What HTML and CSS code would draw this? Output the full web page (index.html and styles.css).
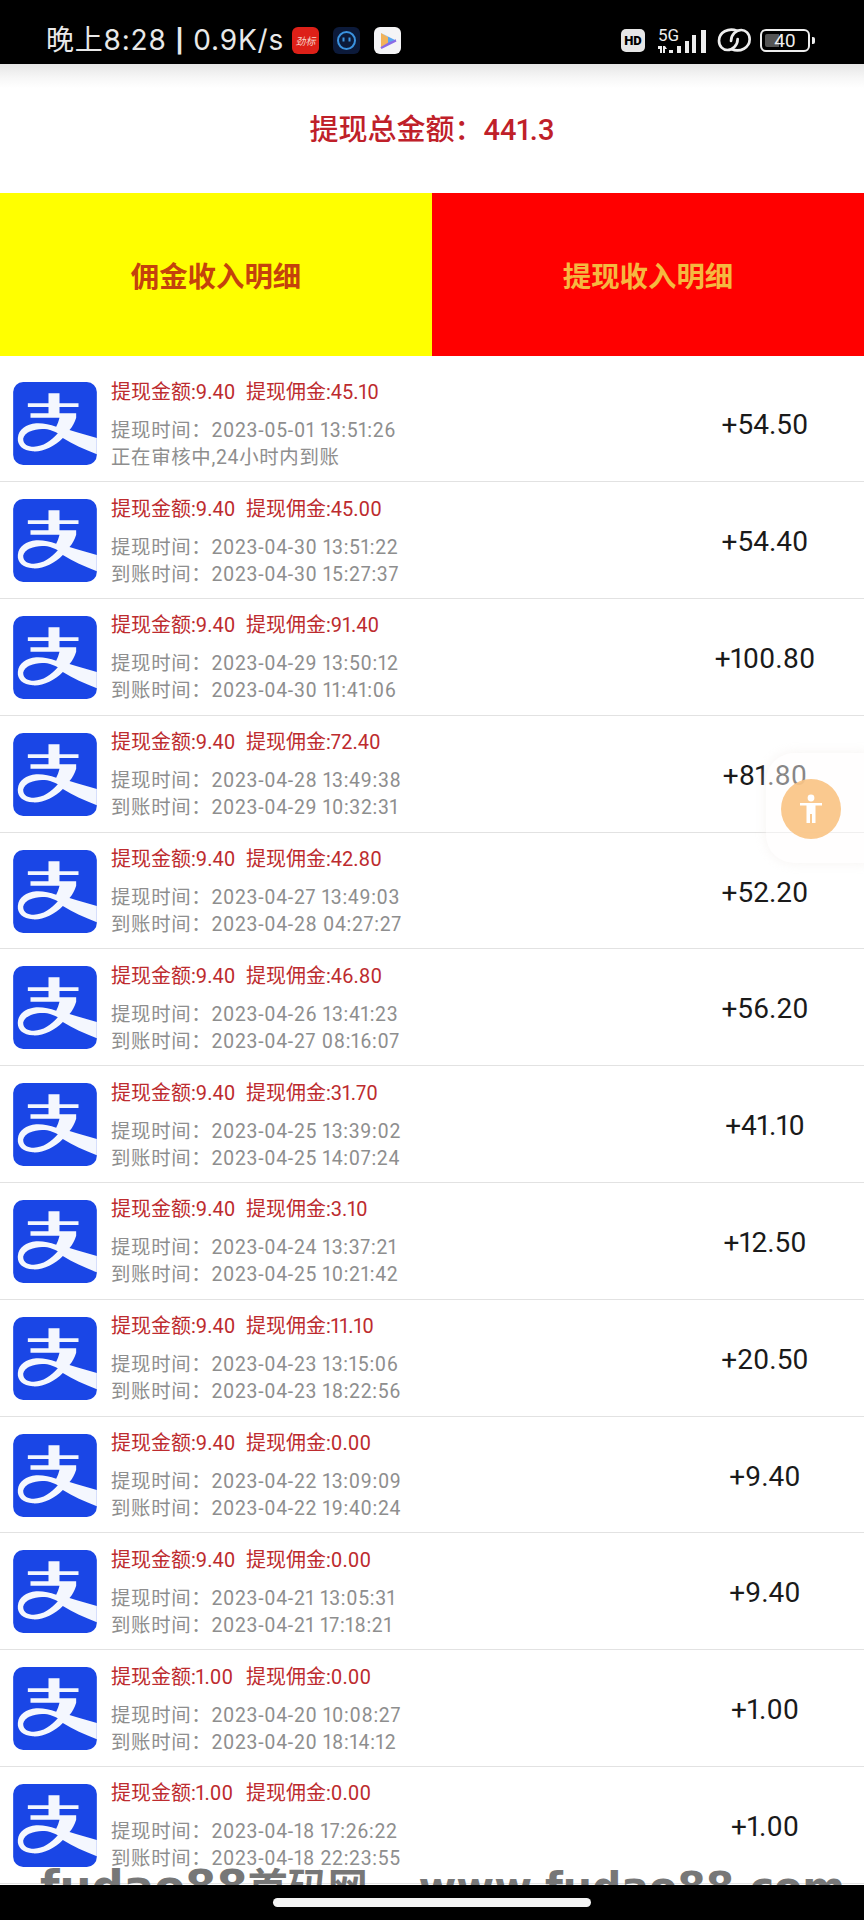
FILE: index.html
```html
<!DOCTYPE html>
<html lang="zh-CN">
<head>
<meta charset="utf-8">
<title>提现收入明细</title>
<link rel="stylesheet" href="styles.css">
</head>
<body>
<svg class="defs" width="0" height="0" aria-hidden="true">
  <symbol id="alipay" viewBox="16 18 251 249">
    <rect x="16" y="18" width="251" height="249" rx="30" fill="#1a46e6"/>
    <path fill="#f4f7fe" d="M60 82H122V52H155V82H212V93H155V112H205V125C200 140 195 150 185 162C210 170 240 178 267 186V235C230 220 195 205 165 186C140 212 105 228 75 226C45 224 28 208 30 186C32 160 55 145 85 142C105 141 125 145 145 152C150 143 152 135 155 125H68V112H122V93H60Z"/>
    <path fill="#1a46e6" d="M118 160C90 155 50 165 46 188C46 205 60 212 78 212C105 212 130 195 150 172C140 167 130 163 118 160Z"/>
  </symbol>
</svg>
<div class="page">
  <header class="status">
    <div class="status-left">
      <span class="status-time">晚上8:28 <span class="status-sep">|</span> 0.9K/s</span>
      <span class="app app-red">劲标</span>
      <span class="app app-navy">
        <svg width="27" height="27" viewBox="0 0 27 27"><circle cx="13.5" cy="13.5" r="8.5" fill="none" stroke="#3b93e0" stroke-width="2"/><rect x="9.5" y="10.5" width="2" height="4" fill="#3b93e0"/><rect x="15.5" y="10.5" width="2" height="4" fill="#3b93e0"/></svg>
      </span>
      <span class="app app-white">
        <svg width="27" height="27" viewBox="0 0 27 27"><path d="M7 6L14 10V17L7 21Z" fill="#f2b35a"/><path d="M7 6L22 13.5L14 17V10Z" fill="#5aa6ee"/><path d="M7 21L14 17L22 13.5L7 21Z" fill="#8a6be6" stroke="#8a6be6" stroke-width="2"/></svg>
      </span>
    </div>
    <div class="status-right">
      <span class="hd">HD</span>
      <svg class="signal" width="54" height="27" viewBox="0 0 54 27">
        <text x="3" y="14" class="net-text">5G</text>
        <path d="M3 19H7V26H5V22H3ZM8 26V19H10L12 22H10V26Z" fill="#eee"/>
        <g fill="#eee">
          <rect x="14" y="23" width="4" height="3"/>
          <rect x="22" y="19" width="4" height="7"/>
          <rect x="30" y="14" width="4" height="12"/>
          <rect x="37" y="8" width="4" height="18"/>
          <rect x="46" y="3" width="5" height="23"/>
        </g>
      </svg>
      <svg class="link" width="34" height="24" viewBox="316 32 102 72" fill="none" stroke="#eee" stroke-width="8" stroke-linecap="round">
        <path d="M376 40C350 30 322 45 322 70C322 88 335 98 347 98C362 98 378 85 378 65"/>
        <path d="M360 96C386 106 414 91 414 66C414 48 401 38 389 38C374 38 358 51 358 71"/>
      </svg>
      <span class="battery"><span class="battery-fill"></span><span class="battery-num">40</span></span>
      <span class="battery-cap"></span>
    </div>
  </header>

  <main class="main">
    <section class="total">提现总金额：441.3</section>
    <nav class="tabs">
      <div class="tab tab-yellow">佣金收入明细</div>
      <div class="tab tab-red">提现收入明细</div>
    </nav>
    <ul class="list">
      <li class="row">
        <svg class="logo"><use href="#alipay"/></svg>
        <div class="info">
          <div class="info-top"><span>提现金额:9.40</span><span>提现佣金:45.10</span></div>
          <div class="info-line">提现时间：2023-05-01 13:51:26</div>
          <div class="info-line">正在审核中,24小时内到账</div>
        </div>
        <div class="amount">+54.50</div>
      </li>
      <li class="row">
        <svg class="logo"><use href="#alipay"/></svg>
        <div class="info">
          <div class="info-top"><span>提现金额:9.40</span><span>提现佣金:45.00</span></div>
          <div class="info-line">提现时间：2023-04-30 13:51:22</div>
          <div class="info-line">到账时间：2023-04-30 15:27:37</div>
        </div>
        <div class="amount">+54.40</div>
      </li>
      <li class="row">
        <svg class="logo"><use href="#alipay"/></svg>
        <div class="info">
          <div class="info-top"><span>提现金额:9.40</span><span>提现佣金:91.40</span></div>
          <div class="info-line">提现时间：2023-04-29 13:50:12</div>
          <div class="info-line">到账时间：2023-04-30 11:41:06</div>
        </div>
        <div class="amount">+100.80</div>
      </li>
      <li class="row">
        <svg class="logo"><use href="#alipay"/></svg>
        <div class="info">
          <div class="info-top"><span>提现金额:9.40</span><span>提现佣金:72.40</span></div>
          <div class="info-line">提现时间：2023-04-28 13:49:38</div>
          <div class="info-line">到账时间：2023-04-29 10:32:31</div>
        </div>
        <div class="amount">+81.80</div>
      </li>
      <li class="row">
        <svg class="logo"><use href="#alipay"/></svg>
        <div class="info">
          <div class="info-top"><span>提现金额:9.40</span><span>提现佣金:42.80</span></div>
          <div class="info-line">提现时间：2023-04-27 13:49:03</div>
          <div class="info-line">到账时间：2023-04-28 04:27:27</div>
        </div>
        <div class="amount">+52.20</div>
      </li>
      <li class="row">
        <svg class="logo"><use href="#alipay"/></svg>
        <div class="info">
          <div class="info-top"><span>提现金额:9.40</span><span>提现佣金:46.80</span></div>
          <div class="info-line">提现时间：2023-04-26 13:41:23</div>
          <div class="info-line">到账时间：2023-04-27 08:16:07</div>
        </div>
        <div class="amount">+56.20</div>
      </li>
      <li class="row">
        <svg class="logo"><use href="#alipay"/></svg>
        <div class="info">
          <div class="info-top"><span>提现金额:9.40</span><span>提现佣金:31.70</span></div>
          <div class="info-line">提现时间：2023-04-25 13:39:02</div>
          <div class="info-line">到账时间：2023-04-25 14:07:24</div>
        </div>
        <div class="amount">+41.10</div>
      </li>
      <li class="row">
        <svg class="logo"><use href="#alipay"/></svg>
        <div class="info">
          <div class="info-top"><span>提现金额:9.40</span><span>提现佣金:3.10</span></div>
          <div class="info-line">提现时间：2023-04-24 13:37:21</div>
          <div class="info-line">到账时间：2023-04-25 10:21:42</div>
        </div>
        <div class="amount">+12.50</div>
      </li>
      <li class="row">
        <svg class="logo"><use href="#alipay"/></svg>
        <div class="info">
          <div class="info-top"><span>提现金额:9.40</span><span>提现佣金:11.10</span></div>
          <div class="info-line">提现时间：2023-04-23 13:15:06</div>
          <div class="info-line">到账时间：2023-04-23 18:22:56</div>
        </div>
        <div class="amount">+20.50</div>
      </li>
      <li class="row">
        <svg class="logo"><use href="#alipay"/></svg>
        <div class="info">
          <div class="info-top"><span>提现金额:9.40</span><span>提现佣金:0.00</span></div>
          <div class="info-line">提现时间：2023-04-22 13:09:09</div>
          <div class="info-line">到账时间：2023-04-22 19:40:24</div>
        </div>
        <div class="amount">+9.40</div>
      </li>
      <li class="row">
        <svg class="logo"><use href="#alipay"/></svg>
        <div class="info">
          <div class="info-top"><span>提现金额:9.40</span><span>提现佣金:0.00</span></div>
          <div class="info-line">提现时间：2023-04-21 13:05:31</div>
          <div class="info-line">到账时间：2023-04-21 17:18:21</div>
        </div>
        <div class="amount">+9.40</div>
      </li>
      <li class="row">
        <svg class="logo"><use href="#alipay"/></svg>
        <div class="info">
          <div class="info-top"><span>提现金额:1.00</span><span>提现佣金:0.00</span></div>
          <div class="info-line">提现时间：2023-04-20 10:08:27</div>
          <div class="info-line">到账时间：2023-04-20 18:14:12</div>
        </div>
        <div class="amount">+1.00</div>
      </li>
      <li class="row">
        <svg class="logo"><use href="#alipay"/></svg>
        <div class="info">
          <div class="info-top"><span>提现金额:1.00</span><span>提现佣金:0.00</span></div>
          <div class="info-line">提现时间：2023-04-18 17:26:22</div>
          <div class="info-line">到账时间：2023-04-18 22:23:55</div>
        </div>
        <div class="amount">+1.00</div>
      </li>
    </ul>

    <div class="float-panel">
      <div class="float-btn">
        <svg width="24" height="30" viewBox="0 0 24 30" fill="#fff"><circle cx="12" cy="4" r="3.4"/><path d="M1 9H23V11.5H16.5V29H13V20H11V29H7.5V11.5H1Z"/></svg>
      </div>
    </div>
    <div class="watermark"><span>fudao88<span class="wm-cjk">首码网</span></span><span class="wm-site">www.fudao88.com</span></div>
  </main>

  <footer class="navbar"><span class="pill"></span></footer>
</div>
</body>
</html>
```
FILE: styles.css
```css
* { box-sizing: border-box; }
html, body { margin: 0; padding: 0; }
body {
  width: 864px;
  height: 1920px;
  overflow: hidden;
  background: #fff;
  font-family: Roboto, "Noto Sans CJK SC", sans-serif;
  font-feature-settings: "pnum";
}
.defs { position: absolute; }
.page { display: flex; flex-direction: column; height: 1920px; }

/* status bar */
.status {
  height: 64px;
  flex: none;
  background: #000;
  color: #e9e9e9;
  display: flex;
  align-items: center;
  justify-content: space-between;
  padding: 16px 49px 0 46px;
}
.status-left { display: flex; align-items: center; }
.status-time {
  font-family: Inter, "Noto Sans CJK SC", sans-serif;
  font-size: 28px;
  line-height: 48px;
  letter-spacing: .8px;
  width: 246px;
  white-space: nowrap;
}
.status-sep { font-size: 23px; font-weight: 700; vertical-align: 1px; }
.app {
  width: 27px;
  height: 27px;
  margin-right: 14px;
  border-radius: 6px;
  display: flex;
  align-items: center;
  justify-content: center;
}
.app-red { background: #dd2018; color: #f6d6c8; font-size: 10px; font-style: italic; }
.app-navy { background: #0c1a3a; }
.app-white { background: #f4f4f6; margin-right: 0; }
.status-right { display: flex; align-items: center; }
.hd {
  width: 24px;
  height: 23px;
  border-radius: 5px;
  background: #e6e6e6;
  color: #000;
  font-size: 13px;
  font-weight: 900;
  line-height: 23px;
  text-align: center;
  margin-right: 10px;
}
.net-text { font-family: Roboto, sans-serif; font-size: 17px; fill: #eee; }
.link { margin: 0 9px 0 8px; }
.battery {
  position: relative;
  width: 50px;
  height: 23px;
  border: 2px solid #eee;
  border-radius: 6px;
  overflow: hidden;
}
.battery-fill { position: absolute; left: 3px; top: 3px; bottom: 3px; width: 14px; background: #555; border-radius: 2px 0 0 2px; }
.battery-num { position: absolute; inset: 0; text-align: center; font-size: 19px; line-height: 19px; color: #eee; }
.battery-cap { width: 3px; height: 7px; margin-left: 2px; background: #eee; border-radius: 0 2px 2px 0; }

/* main */
.main { position: relative; flex: 1; overflow: hidden; }
.total {
  height: 129px;
  display: flex;
  align-items: center;
  justify-content: center;
  padding-bottom: 4px;
  font-size: 29px;
  font-weight: 500;
  color: #bf2029;
  background: linear-gradient(#e6e6e6, #f7f7f7 14px, #fff 24px);
}
.tabs { display: flex; height: 163px; }
.tab {
  flex: 1;
  display: flex;
  align-items: center;
  justify-content: center;
  font-size: 28.4px;
  font-weight: 700;
}
.tab-yellow { background: #ff0; color: #c4420c; }
.tab-red { background: #f00; color: #f5b840; }

/* list */
.list { list-style: none; margin: 0; padding: 9.5px 0 0; }
.row {
  height: 116.8px;
  display: flex;
  align-items: center;
  padding-left: 13px;
  border-bottom: 1px solid #e2e2e2;
}
.logo { width: 84px; height: 83px; flex: none; margin-top: 1px; }
.info { flex: 1; margin-left: 14px; padding-top: 3px; }
.info-top {
  display: flex;
  font-size: 20px;
  line-height: 27px;
  color: #bd2b2e;
  margin-bottom: 11px;
}
.info-top span:first-child { width: 135px; }
.info-line { font-size: 19.4px; letter-spacing: .7px; line-height: 27px; color: #8e8e8e; white-space: nowrap; }
.amount { width: 198px; flex: none; padding-top: 3px; text-align: center; font-size: 28px; color: #1a1a1a; }

/* overlays */
.float-panel {
  position: absolute;
  left: 766px;
  top: 689px;
  width: 124px;
  height: 110px;
  border-radius: 28px;
  background: rgba(255, 253, 252, .48);
  box-shadow: 0 0 12px rgba(240, 235, 232, .6);
}
.float-btn {
  position: absolute;
  left: 15px;
  top: 26px;
  width: 60px;
  height: 60px;
  border-radius: 50%;
  background: rgba(250, 196, 134, .92);
  display: flex;
  align-items: center;
  justify-content: center;
}
.watermark {
  position: absolute;
  left: 40px;
  right: 19px;
  bottom: -28px;
  display: flex;
  justify-content: space-between;
  font-family: "DejaVu Sans", "Noto Sans CJK SC", sans-serif;
  font-size: 45px;
  font-weight: 700;
  line-height: 50px;
  color: #777;
  white-space: nowrap;
}
.wm-cjk { font-size: 40px; }
.wm-site { font-size: 41px; }

/* bottom bar */
.navbar {
  position: relative;
  flex: none;
  height: 35px;
  background: #000;
  display: flex;
  justify-content: center;
  padding-top: 13px;
}
.pill { width: 318px; height: 9px; background: #f4f4f4; border-radius: 5px; }
```
